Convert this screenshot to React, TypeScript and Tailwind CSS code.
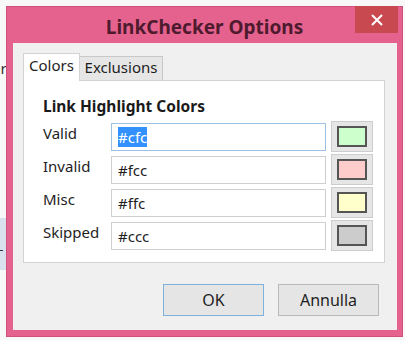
import React from "react";

const font = { fontFamily: '"Noto Sans", "Open Sans", sans-serif' };

function Row({ label, value, color, focused }: { label: string; value: string; color: string; focused?: boolean }) {
  return (
    <div className="flex h-[31px] items-start">
      <div className="w-[68px] pt-[2px] text-[15px] leading-[20px] text-[#1e1e1e]">{label}</div>
      <div
        className={
          "mt-[2px] flex h-[28px] w-[215px] items-center border bg-white pl-[6px] text-[15px] text-[#1e1e1e] " +
          (focused ? "border-[#9dc1e4]" : "border-[#cfcfcf]")
        }
      >
        {focused ? <span className="bg-[#3390ff] leading-[20px] text-white">{value}</span> : <span className="leading-[20px]">{value}</span>}
      </div>
      <div className="ml-[5px] flex h-[31px] w-[42px] items-center justify-center border border-[#cdcdcd] bg-[#e6e6e6]">
        <div className="h-[21px] w-[30px] border-2 border-[#555555]" style={{ backgroundColor: color }} />
      </div>
    </div>
  );
}

export default function App() {
  return (
    <div className="relative h-[340px] w-[405px] overflow-hidden bg-[#f8f8f8]" style={font}>
      <div className="absolute left-0 top-[58px] text-[15px] leading-[20px] text-[#333]" style={{ marginLeft: -8 }}>er</div>
      <div className="absolute left-0 top-[218px] h-[52px] w-[6px] bg-[#d9e1ee]" />
      <div className="absolute left-0 top-[250px] h-[1px] w-[3px] bg-[#333]" />
      <div className="absolute left-[6px] top-[6px] flex h-[331px] w-[397px] flex-col border border-[#d0507e] bg-[#e5628f]">
        <div className="relative flex h-[36px] items-center justify-center pt-[3px]">
          <div className="text-[19px] font-bold leading-[24px] text-[#4e1a2e]">LinkChecker Options</div>
          <div className="absolute right-[4px] top-[-1px] flex h-[27px] w-[43px] items-center justify-center bg-[#c8494f]">
            <svg width="12" height="12" viewBox="0 0 12 12">
              <path d="M1 1 L11 11 M11 1 L1 11" stroke="white" strokeWidth="2" />
            </svg>
          </div>
        </div>
        <div className="ml-[6px] mr-[5px] flex h-[287px] flex-col bg-[#f0f0f0] px-[10px] pt-[10px]">
          <div className="flex h-[27px] items-end">
            <div className="relative z-10 -mb-px flex h-[28px] w-[57px] items-start justify-center border border-b-0 border-[#d3d3d3] bg-white pt-[1px] text-[15px] leading-[20px] text-[#1e1e1e]">
              Colors
            </div>
            <div className="flex h-[24px] w-[83px] items-start justify-center border border-b-0 border-l-0 border-[#c8c8c8] bg-[#e6e6e6] text-[15px] leading-[20px] text-[#1e1e1e]">
              Exclusions
            </div>
          </div>
          <div className="flex h-[183px] w-[362px] flex-col border border-[#d3d3d3] bg-white pl-[19px] pt-[15px]">
            <div className="mb-[5px] text-[15.5px] font-bold leading-[20px] text-[#1a1a1a]">Link Highlight Colors</div>
            <div className="flex flex-col gap-[2px]">
              <Row label="Valid" value="#cfc" color="#ccffcc" focused />
              <Row label="Invalid" value="#fcc" color="#ffcccc" />
              <Row label="Misc" value="#ffc" color="#ffffcc" />
              <Row label="Skipped" value="#ccc" color="#cccccc" />
            </div>
          </div>
          <div className="mt-[21px] flex justify-end gap-[14px] pr-[8px]">
            <div className="flex h-[32px] w-[101px] items-center justify-center border border-[#7fb1df] bg-[#e5e5e5] text-[16px] text-[#1e1e1e]">OK</div>
            <div className="flex h-[32px] w-[101px] items-center justify-center border border-[#b9b9b9] bg-[#e5e5e5] text-[16px] text-[#1e1e1e]">Annulla</div>
          </div>
        </div>
      </div>
    </div>
  );
}
